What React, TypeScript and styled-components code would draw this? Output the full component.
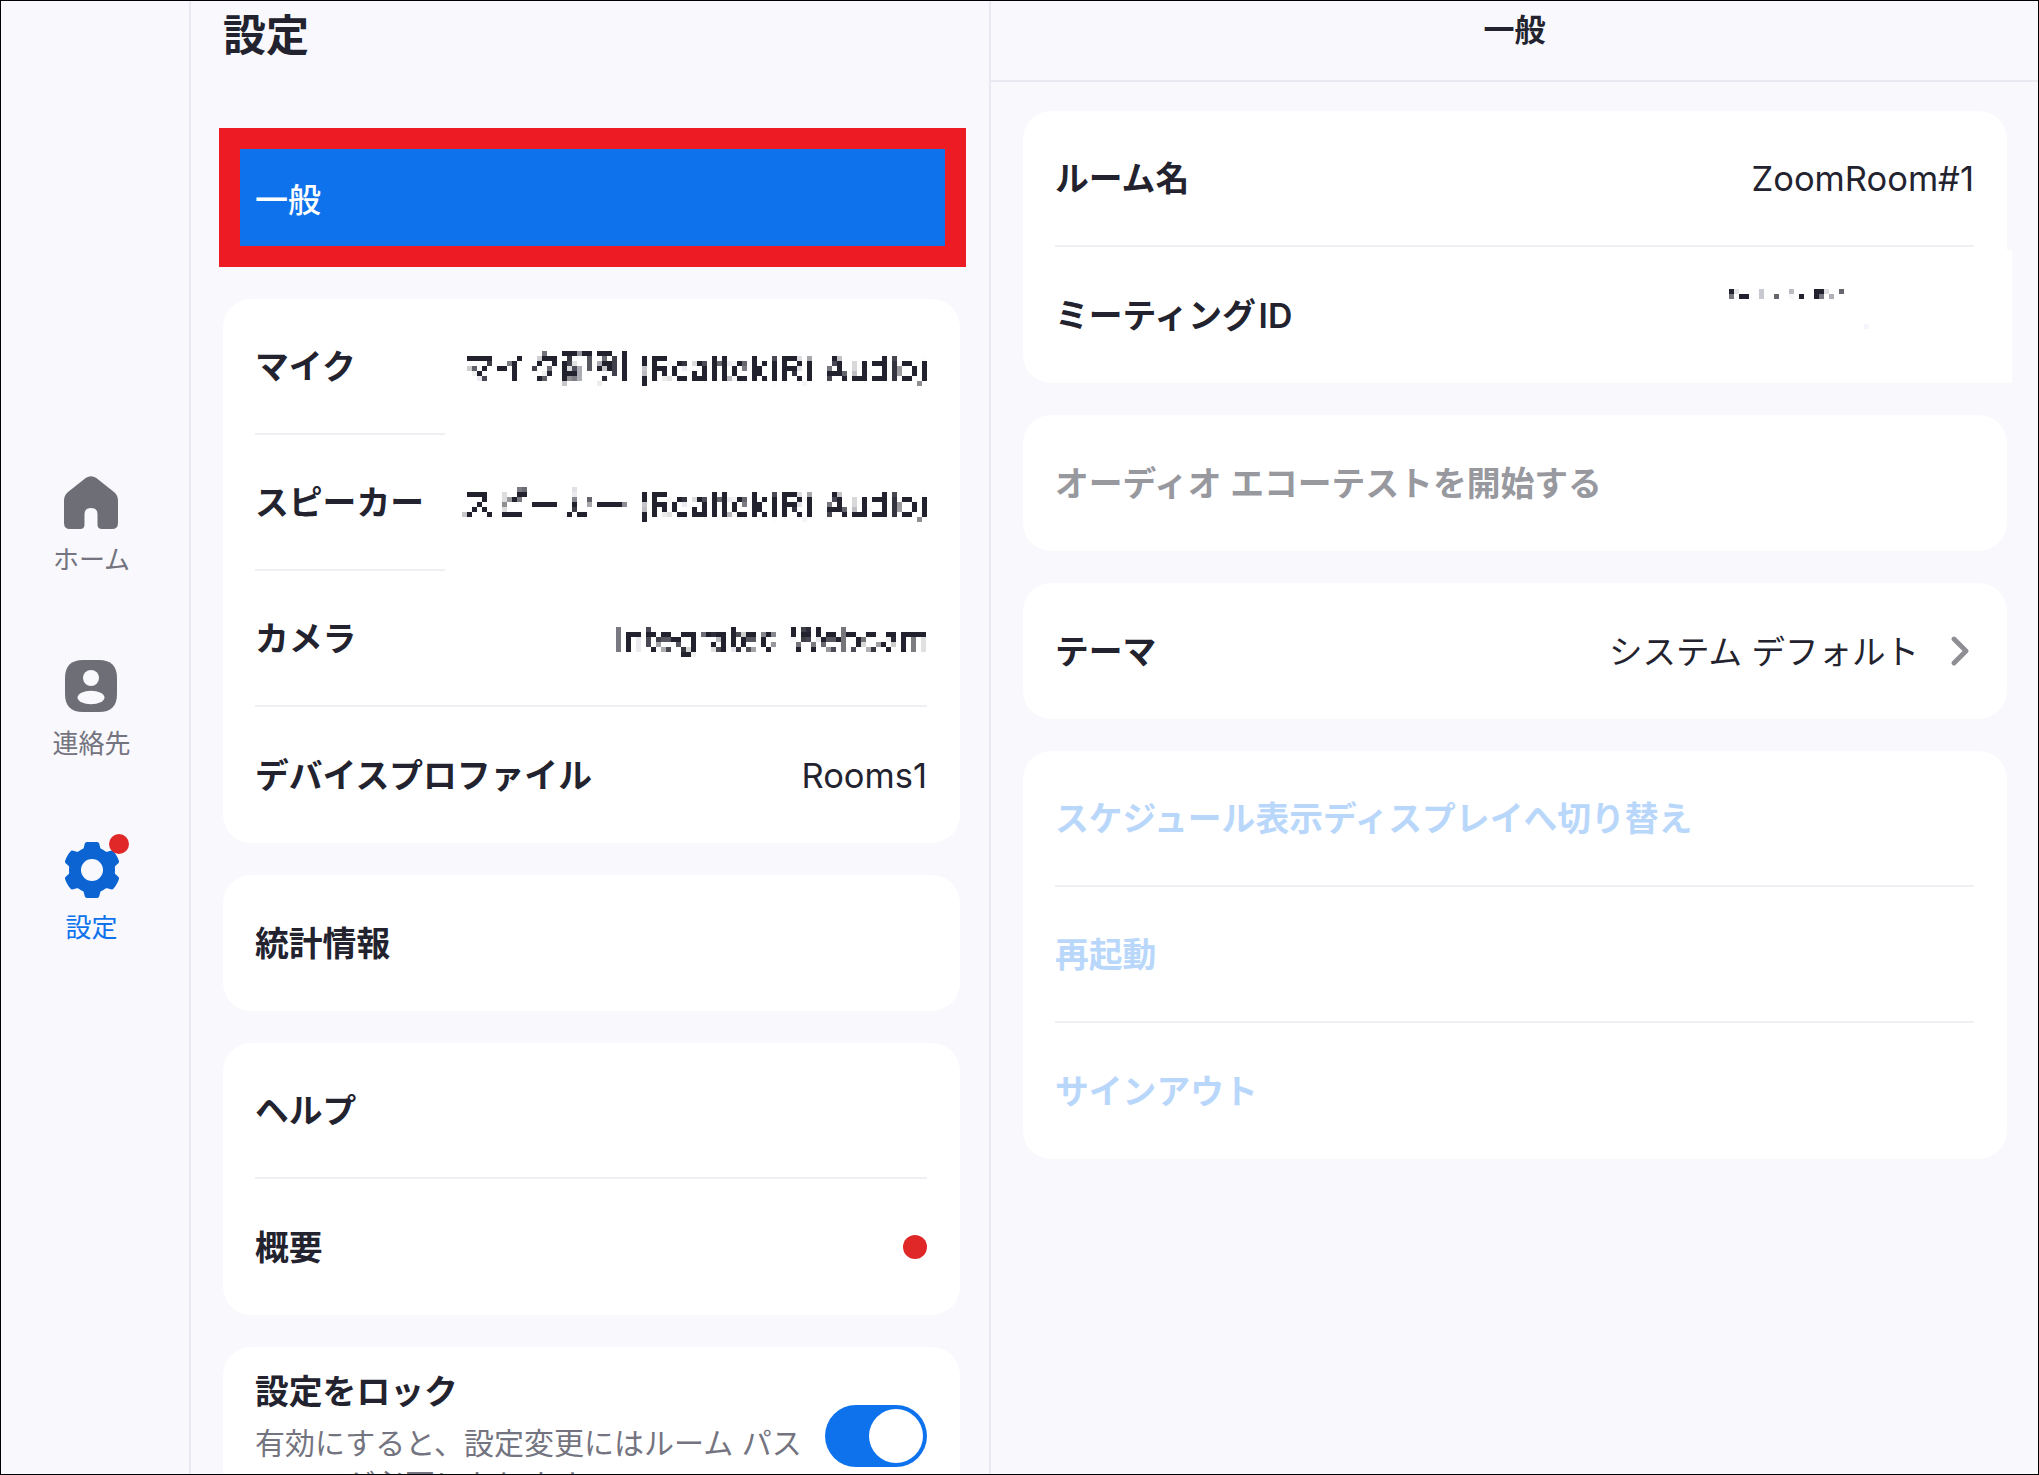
import React from "react";
import styled, { createGlobalStyle } from "styled-components";

const FONT = `Inter, "Noto Sans CJK JP", "Noto Sans", sans-serif`;
const INK = "#23232f";
const LINE = "#efeff4";
const BG = "#f8f8fd";

const Global = createGlobalStyle`
  html, body { margin: 0; padding: 0; background: ${BG}; }
  #root { width: 2039px; height: 1475px; }
`;

const FilterDefs = styled.svg`
  display: block;
  width: 0;
  height: 0;
`;

const Page = styled.div`
  box-sizing: border-box;
  width: 2039px;
  height: 1475px;
  border: 1px solid #000;
  display: flex;
  overflow: hidden;
  background: ${BG};
  font-family: ${FONT};
  color: ${INK};
`;

const Sidebar = styled.nav`
  box-sizing: border-box;
  flex: 0 0 190px;
  border-right: 2px solid #e9e9f1;
  padding: 472px 7px 0 0;
  display: flex;
  flex-direction: column;
  align-items: center;
`;

const NavItem = styled.div<{ $active?: boolean }>`
  height: 184px;
  display: flex;
  flex-direction: column;
  align-items: center;
  color: ${(p) => (p.$active ? "#0e72ed" : "#747480")};
  font-size: 26px;
  line-height: 34px;
`;

const NavIcon = styled.div`
  position: relative;
  width: 56px;
  height: 58px;
  margin-bottom: 12px;
  display: flex;
  align-items: center;
  justify-content: center;
`;

const NavBadge = styled.span`
  position: absolute;
  top: -7px;
  left: 45px;
  width: 20px;
  height: 20px;
  border-radius: 50%;
  background: #e02828;
`;

const ListPane = styled.section`
  box-sizing: border-box;
  flex: 0 0 800px;
  border-right: 2px solid #e9e9f1;
  padding: 0 29px 0 32px;
  display: flex;
  flex-direction: column;
  gap: 32px;
`;

const Title = styled.h1`
  flex: none;
  margin: 0 0 23px;
  height: 72px;
  font-size: 43px;
  line-height: 68px;
  font-weight: 700;
`;

const Highlight = styled.div`
  box-sizing: border-box;
  flex: none;
  margin: 0 -6px 0 -4px;
  height: 139px;
  border: 21px solid #ed1c24;
  background: #0e72ed;
  color: #fff;
  display: flex;
  align-items: center;
  padding-left: 15px;
  font-size: 33px;
  font-weight: 500;
`;

const Card = styled.div<{ $patched?: boolean }>`
  position: relative;
  flex: none;
  background: #fff;
  border-radius: 28px;
  padding: 0 33px 0 32px;

  ${(p) =>
    p.$patched &&
    `&::after {
      content: "";
      position: absolute;
      right: -5px;
      top: 139px;
      bottom: 0;
      width: 300px;
      background: #fff;
    }`}
`;

const Row = styled.div<{ $tail?: boolean }>`
  height: ${(p) => (p.$tail ? 136 : 134)}px;
  display: flex;
  align-items: center;
  justify-content: space-between;
  position: relative;
  z-index: 1;
`;

const Divider = styled.div<{ $short?: boolean }>`
  height: 2px;
  width: ${(p) => (p.$short ? "190px" : "100%")};
  background: ${LINE};
`;

const Label = styled.span<{ $tone?: "muted" | "link" }>`
  font-size: 33.8px;
  font-weight: 600;
  white-space: nowrap;
  padding-bottom: 4px;
  color: ${(p) => (p.$tone === "muted" ? "#98989f" : p.$tone === "link" ? "#b9d7fa" : INK)};
`;

const Value = styled.span`
  font-size: 34.5px;
  font-weight: 400;
  white-space: nowrap;
`;

const ThemeValue = styled.span`
  display: flex;
  align-items: center;
  gap: 32px;
  padding-right: 5px;
  font-size: 33.5px;
  white-space: nowrap;
`;

const ThemeText = styled.span`
  padding-bottom: 4px;
`;

const Mosaic = styled(Value)`
  filter: url(#pixelate);
  font-size: 33px;
  font-weight: 500;
  letter-spacing: 0.3px;
  padding: 6px 0;
  margin-right: -3px;
`;

const RedDot = styled.span`
  width: 24px;
  height: 24px;
  border-radius: 50%;
  background: #e02828;
`;

const LockCard = styled(Card)`
  height: 160px;
  display: flex;
  justify-content: space-between;
  align-items: flex-start;
`;

const LockText = styled.div`
  width: 560px;
  padding-top: 22px;
`;

const LockTitle = styled.div`
  font-size: 33.8px;
  line-height: 46px;
  font-weight: 600;
`;

const LockDesc = styled.div`
  font-size: 30px;
  line-height: 42px;
  color: #747480;
  margin-top: 7px;
`;

const Toggle = styled.div`
  box-sizing: border-box;
  margin-top: 58px;
  width: 102px;
  height: 62px;
  border-radius: 31px;
  background: #0e72ed;
  padding: 4px;
  display: flex;
  justify-content: flex-end;
`;

const Knob = styled.span`
  width: 54px;
  height: 54px;
  border-radius: 50%;
  background: #fff;
`;

const DetailPane = styled.section`
  flex: 1;
  min-width: 0;
  display: flex;
  flex-direction: column;
`;

const DetailHeader = styled.header`
  box-sizing: border-box;
  flex: none;
  height: 81px;
  border-bottom: 2px solid #e9e9f1;
  display: flex;
  justify-content: center;
  align-items: flex-start;
  font-size: 31px;
  line-height: 57px;
  font-weight: 600;
`;

const DetailBody = styled.div`
  padding: 29px 31px 0 32px;
  display: flex;
  flex-direction: column;
  gap: 32px;
`;

const RedactedId = styled.svg`
  align-self: flex-start;
  margin: 42px 105px 0 0;
`;

const HomeIcon = () => (
  <svg width="54" height="53" viewBox="0 0 54 53" fill="#6e6e76">
    <path d="M22 1.8Q27-1.5 32 1.8L50 16Q54 19.5 54 24.5V47Q54 53 48 53H38Q33.5 53 33.5 48.5V38Q33.5 32 27 32Q20.5 32 20.5 38V48.5Q20.5 53 16 53H6Q0 53 0 47V24.5Q0 19.5 4 16Z" />
  </svg>
);

const ContactIcon = () => (
  <svg width="52" height="52" viewBox="0 0 52 52">
    <path fill="#6e6e76" d="M18 0H34C46 0 52 6 52 18V34C52 46 46 52 34 52H18C6 52 0 46 0 34V18C0 6 6 0 18 0Z" />
    <circle cx="26" cy="18" r="8" fill={BG} />
    <ellipse cx="26" cy="37.5" rx="13.5" ry="6.8" fill={BG} />
  </svg>
);

function gearPath(): string {
  const cx = 28;
  const cy = 28;
  const pts: string[] = [];
  for (let i = 0; i < 360; i += 2) {
    const a = (i * Math.PI) / 180;
    const c = Math.cos(6 * a);
    const t = Math.min(1, Math.max(0, (c + 0.75) / 1.0));
    const s = t * t * (3 - 2 * t);
    const r = 23 + 5.4 * s;
    pts.push(`${(cx + r * Math.sin(a)).toFixed(2)} ${(cy - r * Math.cos(a)).toFixed(2)}`);
  }
  const hole = `M${cx - 11} ${cy}a11 11 0 1 0 22 0a11 11 0 1 0-22 0Z`;
  return `M${pts.join("L")}Z${hole}`;
}

const GearIcon = () => (
  <svg width="56" height="56" viewBox="0 0 56 56">
    <path fill="#0b64d2" fillRule="evenodd" d={gearPath()} />
  </svg>
);

const Chevron = () => (
  <svg width="18" height="30" viewBox="0 0 18 30" fill="none">
    <path d="M3 3l12 12L3 27" stroke="#8e8e93" strokeWidth="4.8" strokeLinecap="round" strokeLinejoin="round" />
  </svg>
);

const ID_BLOCKS: [number, number, string][] = [
  [0, 0, "#23232f"], [1, 0, "#e5e5e8"], [6, 0, "#c8c8d0"], [12, 0, "#bbbbc0"],
  [17, 0, "#23232f"], [18, 0, "#23232f"], [19, 0, "#e0e0e4"], [22, 0, "#66666f"],
  [0, 1, "#77777f"], [2, 1, "#23232f"], [3, 1, "#23232f"], [6, 1, "#c8c8d0"],
  [9, 1, "#66666f"], [12, 1, "#f6f6f8"], [14, 1, "#23232f"], [17, 1, "#23232f"],
  [18, 1, "#77777f"], [20, 1, "#b0b0b8"], [27, 7, "#f5f5fc"],
];

export default function App() {
  return (
    <>
      <Global />
      <FilterDefs aria-hidden="true">
        <filter id="pixelate" x="0" y="0" width="100%" height="100%">
          <feFlood x="2" y="2" width="1" height="1" floodColor="#000" />
          <feComposite width="5" height="5" />
          <feTile result="grid" />
          <feComposite in="SourceGraphic" in2="grid" operator="in" />
          <feMorphology operator="dilate" radius="2" />
        </filter>
      </FilterDefs>
      <Page>
        <Sidebar>
          <NavItem>
            <NavIcon><HomeIcon /></NavIcon>
            ホーム
          </NavItem>
          <NavItem>
            <NavIcon><ContactIcon /></NavIcon>
            連絡先
          </NavItem>
          <NavItem $active>
            <NavIcon><GearIcon /><NavBadge /></NavIcon>
            設定
          </NavItem>
        </Sidebar>

        <ListPane>
          <Title>設定</Title>
          <Highlight>一般</Highlight>
          <Card>
            <Row>
              <Label>マイク</Label>
              <Mosaic>マイク配列 (Realtek(R) Audio)</Mosaic>
            </Row>
            <Divider $short />
            <Row>
              <Label>スピーカー</Label>
              <Mosaic>スピーカー (Realtek(R) Audio)</Mosaic>
            </Row>
            <Divider $short />
            <Row>
              <Label>カメラ</Label>
              <Mosaic>Integrated Webcam</Mosaic>
            </Row>
            <Divider />
            <Row $tail>
              <Label>デバイスプロファイル</Label>
              <Value>Rooms1</Value>
            </Row>
          </Card>
          <Card>
            <Row $tail><Label>統計情報</Label></Row>
          </Card>
          <Card>
            <Row><Label>ヘルプ</Label></Row>
            <Divider />
            <Row $tail>
              <Label>概要</Label>
              <RedDot />
            </Row>
          </Card>
          <LockCard>
            <LockText>
              <LockTitle>設定をロック</LockTitle>
              <LockDesc>有効にすると、設定変更にはルーム パスワードが必要になります。</LockDesc>
            </LockText>
            <Toggle><Knob /></Toggle>
          </LockCard>
        </ListPane>

        <DetailPane>
          <DetailHeader>一般</DetailHeader>
          <DetailBody>
            <Card $patched>
              <Row>
                <Label>ルーム名</Label>
                <Value>ZoomRoom#1</Value>
              </Row>
              <Divider />
              <Row $tail>
                <Label>ミーティング{"\u200a"}ID</Label>
                <RedactedId width="140" height="40" viewBox="0 0 140 40">
                  {ID_BLOCKS.map(([c, r, fill]) => (
                    <rect key={`${c}-${r}`} x={c * 5} y={r * 5} width="5" height="5" fill={fill} />
                  ))}
                </RedactedId>
              </Row>
            </Card>
            <Card>
              <Row $tail><Label $tone="muted">オーディオ エコーテストを開始する</Label></Row>
            </Card>
            <Card>
              <Row $tail>
                <Label>テーマ</Label>
                <ThemeValue>
                  <ThemeText>システム デフォルト</ThemeText>
                  <Chevron />
                </ThemeValue>
              </Row>
            </Card>
            <Card>
              <Row><Label $tone="link">スケジュール表示ディスプレイへ切り替え</Label></Row>
              <Divider />
              <Row><Label $tone="link">再起動</Label></Row>
              <Divider />
              <Row $tail><Label $tone="link">サインアウト</Label></Row>
            </Card>
          </DetailBody>
        </DetailPane>
      </Page>
    </>
  );
}
